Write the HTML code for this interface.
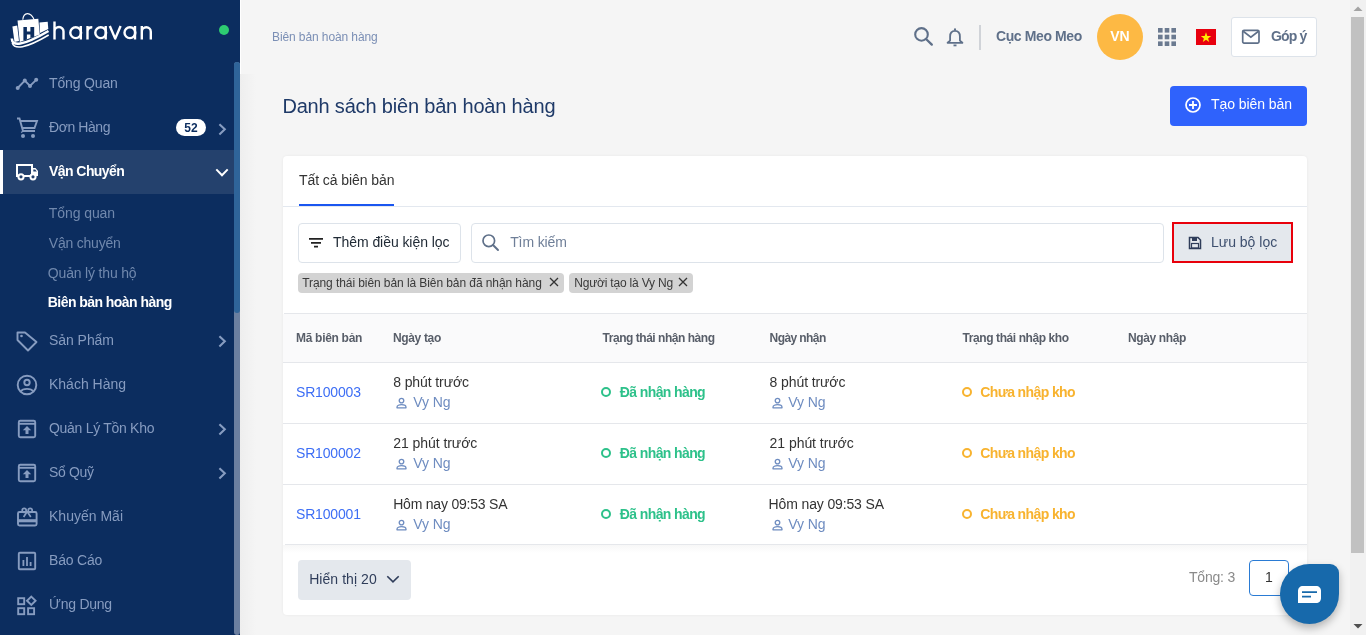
<!DOCTYPE html>
<html><head><meta charset="utf-8">
<style>
*{margin:0;padding:0;box-sizing:border-box}
html,body{width:1366px;height:635px;overflow:hidden;background:#f5f5f5;font-family:"Liberation Sans",sans-serif}
body{filter:grayscale(0)}
.a{position:absolute}
.t{position:absolute;white-space:nowrap}
#sb{position:absolute;left:0;top:0;width:240px;height:635px;background:#0c2d5f}
.mi{position:absolute;left:49px;font-size:14px;line-height:14px;color:#879cc0;white-space:nowrap}
.si{position:absolute;left:48px;font-size:14px;line-height:14px;color:#7088ad;white-space:nowrap}
.ic{position:absolute}
.chev{position:absolute}
.th{top:331.8px;font-size:12px;line-height:12px;font-weight:bold;color:#585e69}
</style></head>
<body>
<!-- SIDEBAR -->
<div id="sb">
  <!-- logo -->
  <svg class="a" style="left:8px;top:10px" width="44" height="40" viewBox="0 0 44 40">
    <g fill="#fff">
      <path d="M4.4 16.4 L9.2 15.4 L11 31 L6.5 32 Z"/>
      <path d="M9.5 10.4 L30.3 8.8 L31.8 24.5 L11.8 32 Z"/>
      <path d="M31.5 12.6 L39.7 11.7 L40.3 19 L32 23 Z"/>
    </g>
    <path d="M14.8 9.8 C15.5 2 22.5 1 26.5 10.4" stroke="#fff" stroke-width="1.1" fill="none"/>
    <path d="M15.4 17 H18.9 V21.6 H22.4 V17 H26.2 V26.8 L22.4 28 V24.6 H18.9 V29.4 L15.4 30.6 Z" fill="#0c2d5f"/>
    <path d="M3.8 28.5 C4 36.5 14 36.5 40.5 21" stroke="#fff" stroke-width="2.6" fill="none"/>
    <path d="M4.2 33 C6.5 39.5 17 39 40.7 25" stroke="#fff" stroke-width="1.5" fill="none"/>
  </svg>
  <svg class="a" style="left:0;top:0" width="160" height="50" viewBox="0 0 160 50">
    <g fill="none" stroke="#fff" stroke-width="2.4">
      <path d="M54.5 21.5 V39.5 M54.5 32 V31.5 A4.5 4.5 0 0 1 63.5 31.5 V39.5"/>
      <circle cx="75.7" cy="32.7" r="5.4"/><path d="M80.8 26 V39.5"/>
      <path d="M87.5 26 V39.5 M87.5 31.5 C87.5 28 89.5 27.2 92.3 27.2"/>
      <circle cx="100.7" cy="32.7" r="5.4"/><path d="M105.7 26 V39.5"/>
      <path d="M109.8 26 L115.2 38.6 L120.6 26" stroke-linejoin="round"/>
      <circle cx="129.9" cy="32.7" r="5.4"/><path d="M135 26 V39.5"/>
      <path d="M141.8 26 V39.5 M141.8 31.7 A4.5 4.5 0 0 1 150.8 31.7 V39.5"/>
    </g>
  </svg>
  <div class="a" style="left:219px;top:25px;width:10px;height:10px;border-radius:50%;background:#2ecc71"></div>

  <!-- scrollbar -->
  <div class="a" style="left:234px;top:62px;width:6px;height:573px;background:#6b7fa0;border-radius:3px"></div>
  <div class="a" style="left:234px;top:62px;width:6px;height:251px;background:#2f6499;border-radius:3px"></div>

  <!-- Tổng Quan -->
  <svg class="ic" style="left:14px;top:76px" width="26" height="16" viewBox="0 0 26 16">
    <polyline points="3.7,12 10.8,4.6 16,10 22.2,3.8" fill="none" stroke="#879cc0" stroke-width="1.9"/>
    <circle cx="3.7" cy="12" r="2" fill="#879cc0"/><circle cx="10.8" cy="4.6" r="2" fill="#879cc0"/>
    <circle cx="16" cy="10" r="2" fill="#879cc0"/><circle cx="22.2" cy="3.8" r="2" fill="#879cc0"/>
  </svg>
  <div class="mi t" style="left:49.0px;top:76px;letter-spacing:-0.15px">Tổng Quan</div>

  <!-- Đơn Hàng -->
  <svg class="ic" style="left:15px;top:116px" width="24" height="24" viewBox="0 0 24 24">
    <path d="M2 2.5 H4.5 L8 15 H20 M5.3 5 H22 L19.5 12 H7.4 M7.2 16.5 L6.5 15.5" fill="none" stroke="#879cc0" stroke-width="1.9"/>
    <circle cx="8" cy="20" r="2" fill="#879cc0"/><circle cx="18" cy="20" r="2" fill="#879cc0"/>
  </svg>
  <div class="mi t" style="left:49.0px;top:120px;letter-spacing:-0.43px">Đơn Hàng</div>
  <div class="t" style="left:176px;top:119px;width:30px;height:17px;border-radius:9px;background:#fff;color:#0c2d5f;font-size:12px;line-height:19px;font-weight:bold;text-align:center">52</div>
  <svg class="chev" style="left:217px;top:123px" width="10" height="13" viewBox="0 0 10 13"><path d="M2.4 1.2 L7.8 6.3 L2.4 11.4" fill="none" stroke="#879cc0" stroke-width="2.1"/></svg>

  <!-- Vận Chuyển active -->
  <div class="a" style="left:0;top:150px;width:234px;height:44px;background:#24416d"></div>
  <div class="a" style="left:0;top:150px;width:3px;height:44px;background:#fff"></div>
  <svg class="ic" style="left:15px;top:162px" width="24" height="20" viewBox="0 0 24 20">
    <path d="M2 3 H17 V14 H2 Z" fill="none" stroke="#fff" stroke-width="2"/>
    <path d="M17 6 H20.5 L23 9 V14 H17 Z" fill="#fff"/>
    <path d="M18.3 7.6 H20.2 L21.8 9.6 H18.3 Z" fill="#24416d"/>
    <circle cx="6" cy="14.8" r="2.6" fill="#24416d" stroke="#fff" stroke-width="2"/>
    <circle cx="18" cy="14.8" r="2.6" fill="#24416d" stroke="#fff" stroke-width="2"/>
  </svg>
  <div class="mi t" style="left:49.0px;top:164px;color:#fff;font-weight:bold;letter-spacing:-0.56px">Vận Chuyển</div>
  <svg class="chev" style="left:215px;top:167px" width="14" height="10" viewBox="0 0 14 10"><path d="M1.3 2.4 L7 8.2 L12.7 2.4" fill="none" stroke="#fff" stroke-width="2"/></svg>

  <div class="si t" style="left:48.8px;top:206px;letter-spacing:-0.08px">Tổng quan</div>
  <div class="si t" style="left:48.8px;top:236px;letter-spacing:-0.22px">Vận chuyển</div>
  <div class="si t" style="left:47.8px;top:266px;letter-spacing:-0.17px">Quản lý thu hộ</div>
  <div class="si t" style="left:47.8px;top:295px;color:#fff;font-weight:bold;letter-spacing:-0.55px">Biên bản hoàn hàng</div>

  <!-- Sản Phẩm -->
  <svg class="ic" style="left:15px;top:330px" width="24" height="24" viewBox="0 0 24 24">
    <path d="M2.5 2.5 H10 L21.5 12 L13 20.5 L2.5 10 Z" fill="none" stroke="#879cc0" stroke-width="1.9" stroke-linejoin="round"/>
    <circle cx="6.5" cy="6" r="1.3" fill="#879cc0"/>
  </svg>
  <div class="mi t" style="left:49.0px;top:333px;letter-spacing:-0.05px">Sản Phẩm</div>
  <svg class="chev" style="left:217px;top:335px" width="10" height="13" viewBox="0 0 10 13"><path d="M2.4 1.2 L7.8 6.3 L2.4 11.4" fill="none" stroke="#879cc0" stroke-width="2.1"/></svg>

  <!-- Khách Hàng -->
  <svg class="ic" style="left:15px;top:373px" width="24" height="24" viewBox="0 0 24 24">
    <circle cx="12" cy="12" r="9.3" fill="none" stroke="#879cc0" stroke-width="1.9"/>
    <circle cx="12" cy="9.5" r="2.7" fill="none" stroke="#879cc0" stroke-width="1.9"/>
    <path d="M5.5 18.5 C8 15 16 15 18.5 18.5" fill="none" stroke="#879cc0" stroke-width="1.9"/>
  </svg>
  <div class="mi t" style="left:49.0px;top:377px;letter-spacing:0.00px">Khách Hàng</div>

  <!-- Quản Lý Tồn Kho -->
  <svg class="ic" style="left:15px;top:417px" width="24" height="24" viewBox="0 0 24 24">
    <rect x="3.8" y="3.8" width="16.4" height="16.4" rx="1.5" fill="none" stroke="#879cc0" stroke-width="1.9"/>
    <line x1="3.8" y1="6.8" x2="20.2" y2="6.8" stroke="#879cc0" stroke-width="1.9"/>
    <path d="M12 9 L16.2 13.2 H13.5 V17 H10.5 V13.2 H7.8 Z" fill="#879cc0"/>
  </svg>
  <div class="mi t" style="left:49.0px;top:421px;letter-spacing:-0.29px">Quản Lý Tồn Kho</div>
  <svg class="chev" style="left:217px;top:423px" width="10" height="13" viewBox="0 0 10 13"><path d="M2.4 1.2 L7.8 6.3 L2.4 11.4" fill="none" stroke="#879cc0" stroke-width="2.1"/></svg>

  <!-- Sổ Quỹ -->
  <svg class="ic" style="left:15px;top:461px" width="24" height="24" viewBox="0 0 24 24">
    <rect x="3.8" y="3.8" width="16.4" height="16.4" rx="1.5" fill="none" stroke="#879cc0" stroke-width="1.9"/>
    <line x1="3.8" y1="6.8" x2="20.2" y2="6.8" stroke="#879cc0" stroke-width="1.9"/>
    <path d="M12 9 L16.2 13.2 H13.5 V17 H10.5 V13.2 H7.8 Z" fill="#879cc0"/>
  </svg>
  <div class="mi t" style="left:49.0px;top:465px;letter-spacing:-0.36px">Sổ Quỹ</div>
  <svg class="chev" style="left:217px;top:467px" width="10" height="13" viewBox="0 0 10 13"><path d="M2.4 1.2 L7.8 6.3 L2.4 11.4" fill="none" stroke="#879cc0" stroke-width="2.1"/></svg>

  <!-- Khuyến Mãi -->
  <svg class="ic" style="left:15px;top:505px" width="24" height="24" viewBox="0 0 24 24">
    <rect x="3" y="7" width="18.6" height="13.5" rx="1.5" fill="none" stroke="#879cc0" stroke-width="1.9"/>
    <rect x="3" y="14.2" width="18.6" height="3.1" fill="#879cc0"/>
    <circle cx="9.2" cy="5.3" r="2" fill="none" stroke="#879cc0" stroke-width="1.7"/>
    <circle cx="15.2" cy="5.3" r="2" fill="none" stroke="#879cc0" stroke-width="1.7"/>
    <path d="M11.6 7.5 L8.6 12 M12.8 7.5 L15.8 12" fill="none" stroke="#879cc0" stroke-width="1.7"/>
  </svg>
  <div class="mi t" style="left:49.0px;top:509px;letter-spacing:0.01px">Khuyến Mãi</div>

  <!-- Báo Cáo -->
  <svg class="ic" style="left:15px;top:549px" width="24" height="24" viewBox="0 0 24 24">
    <rect x="3.8" y="3.8" width="16.4" height="16.4" rx="1" fill="none" stroke="#879cc0" stroke-width="1.9"/>
    <rect x="7.5" y="11" width="1.8" height="6" fill="#879cc0"/>
    <rect x="11.1" y="8" width="1.8" height="9" fill="#879cc0"/>
    <rect x="14.7" y="13" width="1.8" height="4" fill="#879cc0"/>
  </svg>
  <div class="mi t" style="left:49.0px;top:553px;letter-spacing:-0.20px">Báo Cáo</div>

  <!-- Ứng Dụng -->
  <svg class="ic" style="left:15px;top:594px" width="24" height="24" viewBox="0 0 24 24">
    <rect x="3.2" y="4.2" width="6" height="6" fill="none" stroke="#879cc0" stroke-width="1.9"/>
    <rect x="3.2" y="14.2" width="6" height="6" fill="none" stroke="#879cc0" stroke-width="1.9"/>
    <rect x="13.1" y="14.2" width="6" height="6" fill="none" stroke="#879cc0" stroke-width="1.9"/>
    <path d="M16.3 2.6 L20.6 6.8 L16.3 11 L12 6.8 Z" fill="none" stroke="#879cc0" stroke-width="1.9"/>
  </svg>
  <div class="mi t" style="left:49.0px;top:597px;letter-spacing:-0.26px">Ứng Dụng</div>
</div>


<!-- MAIN -->
<div class="a" style="left:240px;top:0;width:1px;height:74px;background:#fff"></div>
<div class="a" style="left:240px;top:74px;width:16px;height:561px;background:linear-gradient(to right,#eeeeee,#f5f5f5)"></div>
<div class="t" style="left:272.0px;top:30.6px;font-size:12px;line-height:12px;color:#7b8fb5;letter-spacing:-0.10px">Biên bản hoàn hàng</div>

<!-- header right -->
<svg class="a" style="left:912px;top:25px" width="24" height="24" viewBox="0 0 24 24">
  <circle cx="9.5" cy="9.4" r="6.3" fill="none" stroke="#5f7089" stroke-width="2.1"/>
  <path d="M14.3 14.2 L19.8 19.6" stroke="#5f7089" stroke-width="2.3" stroke-linecap="round"/>
</svg>
<svg class="a" style="left:945px;top:26px" width="20" height="22" viewBox="0 0 20 22">
  <path d="M2.6 16.8 L5.1 14.6 V10.5 C5.1 6.8 7.2 4.9 10 4.9 C12.8 4.9 14.9 6.8 14.9 10.5 V14.6 L17.4 16.8 Z" fill="none" stroke="#5f7089" stroke-width="1.8" stroke-linejoin="round"/>
  <circle cx="10" cy="3.4" r="1.1" fill="#5f7089"/>
  <path d="M8.5 19.4 H11.5" stroke="#5f7089" stroke-width="1.8"/>
</svg>
<div class="a" style="left:979px;top:25px;width:2px;height:25px;background:#d0d3d8"></div>
<div class="t" id="cmm" style="left:996.0px;top:29px;font-size:14px;line-height:14px;font-weight:bold;color:#5f7089;letter-spacing:-0.40px">Cục Meo Meo</div>
<div class="a" style="left:1097px;top:14px;width:46px;height:46px;border-radius:50%;background:#fdb944"></div>
<div class="t" style="left:1097px;top:29.3px;width:46px;text-align:center;font-size:14px;line-height:14px;font-weight:bold;color:#fff">VN</div>
<svg class="a" style="left:1158px;top:28px" width="18" height="18" viewBox="0 0 18 18" fill="#6b7a90">
  <rect x="0" y="0" width="4.6" height="4.6"/><rect x="6.7" y="0" width="4.6" height="4.6"/><rect x="13.4" y="0" width="4.6" height="4.6"/>
  <rect x="0" y="6.7" width="4.6" height="4.6"/><rect x="6.7" y="6.7" width="4.6" height="4.6"/><rect x="13.4" y="6.7" width="4.6" height="4.6"/>
  <rect x="0" y="13.4" width="4.6" height="4.6"/><rect x="6.7" y="13.4" width="4.6" height="4.6"/><rect x="13.4" y="13.4" width="4.6" height="4.6"/>
</svg>
<svg class="a" style="left:1196px;top:29px" width="20" height="16" viewBox="0 0 20 16">
  <rect width="20" height="16" fill="#e8000e"/>
  <path d="M10 3.2 L11.3 7 L15.2 7 L12.1 9.4 L13.2 13.1 L10 10.8 L6.8 13.1 L7.9 9.4 L4.8 7 L8.7 7 Z" fill="#ffec00"/>
</svg>
<div class="a" style="left:1231px;top:17px;width:86px;height:40px;background:#fff;border:1px solid #dde3ea;border-radius:3px"></div>
<svg class="a" style="left:1241px;top:28px" width="20" height="17" viewBox="0 0 20 17">
  <rect x="1.7" y="2.3" width="16.3" height="12.8" rx="1.3" fill="none" stroke="#5f7089" stroke-width="1.7"/>
  <path d="M2.2 3.3 L9.85 9.1 L17.5 3.3" fill="none" stroke="#5f7089" stroke-width="1.7"/>
</svg>
<div class="t" style="left:1271.0px;top:29px;font-size:14px;line-height:14px;font-weight:bold;color:#5f7089;letter-spacing:-0.83px">Góp ý</div>

<!-- title -->
<div class="t" id="title" style="left:282.4px;top:96.2px;font-size:20px;line-height:20px;color:#1f3a68;letter-spacing:-0.18px">Danh sách biên bản hoàn hàng</div>
<div class="a" style="left:1170px;top:86px;width:137px;height:40px;background:#2f62fc;border-radius:4px"></div>
<svg class="a" style="left:1184px;top:96px" width="18" height="18" viewBox="0 0 18 18">
  <circle cx="9" cy="9" r="7" fill="none" stroke="#fff" stroke-width="1.7"/>
  <path d="M9 5 V13 M5 9 H13" stroke="#fff" stroke-width="1.8"/>
</svg>
<div class="t" style="left:1211.0px;top:96.8px;font-size:14px;line-height:14px;color:#fff;letter-spacing:-0.07px">Tạo biên bản</div>

<!-- card -->
<div class="a" style="left:283px;top:156px;width:1024px;height:459px;background:#fff;border-radius:4px;box-shadow:0 0 3px rgba(0,0,0,0.06)"></div>
<div class="t" style="left:299.0px;top:172.8px;font-size:14px;line-height:14px;color:#333;letter-spacing:-0.07px">Tất cả biên bản</div>
<div class="a" style="left:283px;top:206px;width:1024px;height:1px;background:#e3e8ef"></div>
<div class="a" style="left:299px;top:204px;width:95px;height:2px;background:#1a56f0"></div>

<div class="a" style="left:298px;top:223px;width:163px;height:40px;border:1px solid #dde3ea;border-radius:4px"></div>
<svg class="a" style="left:308px;top:236px" width="16" height="12" viewBox="0 0 16 12">
  <path d="M1 2.8 H15 M3 6.9 H13 M6 10.7 H10" stroke="#222" stroke-width="1.7"/>
</svg>
<div class="t" style="left:333.0px;top:234.7px;font-size:14px;line-height:14px;color:#212b36;letter-spacing:-0.06px">Thêm điều kiện lọc</div>
<div class="a" style="left:471px;top:223px;width:693px;height:40px;border:1px solid #dde3ea;border-radius:4px"></div>
<svg class="a" style="left:480px;top:232px" width="22" height="22" viewBox="0 0 22 22">
  <circle cx="8.8" cy="8.8" r="5.8" fill="none" stroke="#5f7089" stroke-width="1.7"/>
  <path d="M13 13 L18 18" stroke="#5f7089" stroke-width="1.9" stroke-linecap="round"/>
</svg>
<div class="t" style="left:510.2px;top:234.7px;font-size:14px;line-height:14px;color:#6f7f98;letter-spacing:-0.12px">Tìm kiếm</div>
<div class="a" style="left:1172px;top:222px;width:121px;height:41px;background:#e4e8ed;border:2px solid #e8000b"></div>
<svg class="a" style="left:1188px;top:236px" width="14" height="14" viewBox="0 0 14 14">
  <path d="M1.5 1.5 H10 L12.5 4 V12.5 H1.5 Z" fill="none" stroke="#2f3d5a" stroke-width="1.5"/>
  <rect x="4" y="2" width="5" height="3" fill="#2f3d5a"/>
  <rect x="3.5" y="7.5" width="7" height="4.5" fill="none" stroke="#2f3d5a" stroke-width="1.2"/>
</svg>
<div class="t" style="left:1211.0px;top:234.7px;font-size:14px;line-height:14px;color:#3d4f6e;letter-spacing:0.00px">Lưu bộ lọc</div>

<div class="a" style="left:298px;top:273px;width:266px;height:20px;background:#d3d3d3;border-radius:4px"></div>
<div class="t" style="left:302.2px;top:276.5px;font-size:12px;line-height:12px;color:#3a3a3a;letter-spacing:-0.08px">Trạng thái biên bản là Biên bản đã nhận hàng</div>
<svg class="a" style="left:549px;top:277px" width="10" height="10" viewBox="0 0 10 10"><path d="M1 1 L9 9 M9 1 L1 9" stroke="#333" stroke-width="1.3"/></svg>
<div class="a" style="left:569px;top:273px;width:124px;height:20px;background:#d3d3d3;border-radius:4px"></div>
<div class="t" style="left:574.2px;top:276.5px;font-size:12px;line-height:12px;color:#3a3a3a;letter-spacing:-0.19px">Người tạo là Vy Ng</div>
<svg class="a" style="left:678px;top:277px" width="10" height="10" viewBox="0 0 10 10"><path d="M1 1 L9 9 M9 1 L1 9" stroke="#333" stroke-width="1.3"/></svg>

<!-- table -->
<div class="a" style="left:284px;top:313px;width:1023px;height:1px;background:#e5e7eb"></div>
<div class="a" style="left:283px;top:314px;width:1024px;height:48px;background:#fafafb"></div>
<div class="a" style="left:283px;top:362px;width:1024px;height:1px;background:#e5e7eb"></div>
<div class="th t" style="left:296.0px;letter-spacing:-0.30px">Mã biên bản</div>
<div class="th t" style="left:393.0px;letter-spacing:-0.35px">Ngày tạo</div>
<div class="th t" style="left:602.6px;letter-spacing:-0.47px">Trạng thái nhận hàng</div>
<div class="th t" style="left:769.6px;letter-spacing:-0.58px">Ngày nhận</div>
<div class="th t" style="left:962.6px;letter-spacing:-0.42px">Trạng thái nhập kho</div>
<div class="th t" style="left:1128.0px;letter-spacing:-0.38px">Ngày nhập</div>
<div class="t" style="left:296.0px;top:384.5px;font-size:14px;line-height:14px;color:#3d6ef5;letter-spacing:-0.17px">SR100003</div>
<div class="t" style="left:393.2px;top:375.2px;font-size:14px;line-height:14px;color:#333;letter-spacing:-0.10px">8 phút trước</div>
<svg class="a" style="left:395px;top:396.5px" width="13" height="13" viewBox="0 0 13 13"><circle cx="6.5" cy="3.6" r="2.3" fill="none" stroke="#6e8cc0" stroke-width="1.3"/><path d="M2 10.8 V10.2 C2 8.5 4.2 7.6 6.5 7.6 C8.8 7.6 11 8.5 11 10.2 V10.8 Z" fill="none" stroke="#6e8cc0" stroke-width="1.3" stroke-linejoin="round"/></svg>
<div class="t" style="left:413.2px;top:395.2px;font-size:14px;line-height:14px;color:#6e8cc0;letter-spacing:-0.05px">Vy Ng</div>
<div class="a" style="left:600.5px;top:386.8px;width:10px;height:10px;border:2px solid #2dc18a;border-radius:50%"></div>
<div class="t" style="left:619.8px;top:385.0px;font-size:14px;line-height:14px;font-weight:bold;color:#2dc18a;letter-spacing:-0.61px">Đã nhận hàng</div>
<div class="t" style="left:769.6px;top:375.2px;font-size:14px;line-height:14px;color:#333;letter-spacing:-0.10px">8 phút trước</div>
<svg class="a" style="left:771px;top:396.5px" width="13" height="13" viewBox="0 0 13 13"><circle cx="6.5" cy="3.6" r="2.3" fill="none" stroke="#6e8cc0" stroke-width="1.3"/><path d="M2 10.8 V10.2 C2 8.5 4.2 7.6 6.5 7.6 C8.8 7.6 11 8.5 11 10.2 V10.8 Z" fill="none" stroke="#6e8cc0" stroke-width="1.3" stroke-linejoin="round"/></svg>
<div class="t" style="left:788.2px;top:395.2px;font-size:14px;line-height:14px;color:#6e8cc0;letter-spacing:-0.05px">Vy Ng</div>
<div class="a" style="left:961.5px;top:386.8px;width:10px;height:10px;border:2px solid #f8b32f;border-radius:50%"></div>
<div class="t" style="left:980.2px;top:385.0px;font-size:14px;line-height:14px;font-weight:bold;color:#f8b32f;letter-spacing:-0.61px">Chưa nhập kho</div>
<div class="a" style="left:283px;top:423px;width:1024px;height:1px;background:#e5e7eb"></div>
<div class="t" style="left:296.0px;top:445.5px;font-size:14px;line-height:14px;color:#3d6ef5;letter-spacing:-0.17px">SR100002</div>
<div class="t" style="left:393.2px;top:436.2px;font-size:14px;line-height:14px;color:#333;letter-spacing:-0.05px">21 phút trước</div>
<svg class="a" style="left:395px;top:457.5px" width="13" height="13" viewBox="0 0 13 13"><circle cx="6.5" cy="3.6" r="2.3" fill="none" stroke="#6e8cc0" stroke-width="1.3"/><path d="M2 10.8 V10.2 C2 8.5 4.2 7.6 6.5 7.6 C8.8 7.6 11 8.5 11 10.2 V10.8 Z" fill="none" stroke="#6e8cc0" stroke-width="1.3" stroke-linejoin="round"/></svg>
<div class="t" style="left:413.2px;top:456.2px;font-size:14px;line-height:14px;color:#6e8cc0;letter-spacing:-0.05px">Vy Ng</div>
<div class="a" style="left:600.5px;top:447.8px;width:10px;height:10px;border:2px solid #2dc18a;border-radius:50%"></div>
<div class="t" style="left:619.8px;top:446.0px;font-size:14px;line-height:14px;font-weight:bold;color:#2dc18a;letter-spacing:-0.61px">Đã nhận hàng</div>
<div class="t" style="left:769.6px;top:436.2px;font-size:14px;line-height:14px;color:#333;letter-spacing:-0.05px">21 phút trước</div>
<svg class="a" style="left:771px;top:457.5px" width="13" height="13" viewBox="0 0 13 13"><circle cx="6.5" cy="3.6" r="2.3" fill="none" stroke="#6e8cc0" stroke-width="1.3"/><path d="M2 10.8 V10.2 C2 8.5 4.2 7.6 6.5 7.6 C8.8 7.6 11 8.5 11 10.2 V10.8 Z" fill="none" stroke="#6e8cc0" stroke-width="1.3" stroke-linejoin="round"/></svg>
<div class="t" style="left:788.2px;top:456.2px;font-size:14px;line-height:14px;color:#6e8cc0;letter-spacing:-0.05px">Vy Ng</div>
<div class="a" style="left:961.5px;top:447.8px;width:10px;height:10px;border:2px solid #f8b32f;border-radius:50%"></div>
<div class="t" style="left:980.2px;top:446.0px;font-size:14px;line-height:14px;font-weight:bold;color:#f8b32f;letter-spacing:-0.61px">Chưa nhập kho</div>
<div class="a" style="left:283px;top:484px;width:1024px;height:1px;background:#e5e7eb"></div>
<div class="t" style="left:296.0px;top:506.5px;font-size:14px;line-height:14px;color:#3d6ef5;letter-spacing:-0.17px">SR100001</div>
<div class="t" style="left:393.2px;top:497.2px;font-size:14px;line-height:14px;color:#333;letter-spacing:-0.21px">Hôm nay 09:53 SA</div>
<svg class="a" style="left:395px;top:518.5px" width="13" height="13" viewBox="0 0 13 13"><circle cx="6.5" cy="3.6" r="2.3" fill="none" stroke="#6e8cc0" stroke-width="1.3"/><path d="M2 10.8 V10.2 C2 8.5 4.2 7.6 6.5 7.6 C8.8 7.6 11 8.5 11 10.2 V10.8 Z" fill="none" stroke="#6e8cc0" stroke-width="1.3" stroke-linejoin="round"/></svg>
<div class="t" style="left:413.2px;top:517.2px;font-size:14px;line-height:14px;color:#6e8cc0;letter-spacing:-0.05px">Vy Ng</div>
<div class="a" style="left:600.5px;top:508.8px;width:10px;height:10px;border:2px solid #2dc18a;border-radius:50%"></div>
<div class="t" style="left:619.8px;top:507.0px;font-size:14px;line-height:14px;font-weight:bold;color:#2dc18a;letter-spacing:-0.61px">Đã nhận hàng</div>
<div class="t" style="left:768.6px;top:497.2px;font-size:14px;line-height:14px;color:#333;letter-spacing:-0.14px">Hôm nay 09:53 SA</div>
<svg class="a" style="left:771px;top:518.5px" width="13" height="13" viewBox="0 0 13 13"><circle cx="6.5" cy="3.6" r="2.3" fill="none" stroke="#6e8cc0" stroke-width="1.3"/><path d="M2 10.8 V10.2 C2 8.5 4.2 7.6 6.5 7.6 C8.8 7.6 11 8.5 11 10.2 V10.8 Z" fill="none" stroke="#6e8cc0" stroke-width="1.3" stroke-linejoin="round"/></svg>
<div class="t" style="left:788.2px;top:517.2px;font-size:14px;line-height:14px;color:#6e8cc0;letter-spacing:-0.05px">Vy Ng</div>
<div class="a" style="left:961.5px;top:508.8px;width:10px;height:10px;border:2px solid #f8b32f;border-radius:50%"></div>
<div class="t" style="left:980.2px;top:507.0px;font-size:14px;line-height:14px;font-weight:bold;color:#f8b32f;letter-spacing:-0.61px">Chưa nhập kho</div>
<div class="a" style="left:285px;top:544px;width:1022px;height:1px;background:#e5e7eb"></div>

<div class="a" style="left:283px;top:545px;width:1024px;height:8px;background:linear-gradient(#f7f7f7,#fff)"></div>

<!-- footer -->
<div class="a" style="left:298px;top:560px;width:113px;height:40px;background:#e4e8ed;border-radius:4px"></div>
<div class="t" style="left:309.2px;top:572.1px;font-size:14px;line-height:14px;color:#2f3d5a;letter-spacing:0.06px">Hiển thị 20</div>
<svg class="a" style="left:385px;top:573px" width="16" height="12" viewBox="0 0 16 12"><path d="M2.3 3.2 L8 8.8 L13.7 3.2" fill="none" stroke="#2f3d5a" stroke-width="1.6"/></svg>
<div class="t" style="left:1189.0px;top:570px;font-size:14px;line-height:14px;color:#8a8a8a;letter-spacing:-0.20px">Tổng: 3</div>
<div class="a" style="left:1249px;top:560px;width:40px;height:36px;border:1px solid #2a7bd4;border-radius:4px"></div>
<div class="t" style="left:1249px;top:570px;width:40px;text-align:center;font-size:14px;line-height:14px;color:#333">1</div>

<!-- chat bubble -->
<div class="a" style="left:1280px;top:564px;width:59px;height:60px;background:#1769ab;border-radius:50% 9px 50% 50%;box-shadow:0 4px 8px rgba(0,0,0,0.28)"></div>
<svg class="a" style="left:1297px;top:584px" width="26" height="22" viewBox="0 0 26 22">
  <path d="M1 19 V7 C1 4 3 2 6 2 H19 C22 2 24 4 24 7 V14 C24 17 22 19 19 19 Z" fill="#fff"/>
  <path d="M5 8.2 H20 M5 12.6 H14" stroke="#1769ab" stroke-width="1.7"/>
</svg>

<!-- browser scrollbar -->
<div class="a" style="left:1350px;top:0;width:16px;height:635px;background:#f1f1f1"></div>
<svg class="a" style="left:1350px;top:0" width="16" height="16" viewBox="0 0 16 16"><path d="M3.5 11 L8 6.5 L12.5 11 Z" fill="#a3a3a3"/></svg>
<div class="a" style="left:1351px;top:17px;width:13px;height:536px;background:#c1c1c1"></div>
<svg class="a" style="left:1350px;top:619px" width="16" height="16" viewBox="0 0 16 16"><path d="M3.5 5 L8 9.5 L12.5 5 Z" fill="#505050"/></svg>
</body></html>
